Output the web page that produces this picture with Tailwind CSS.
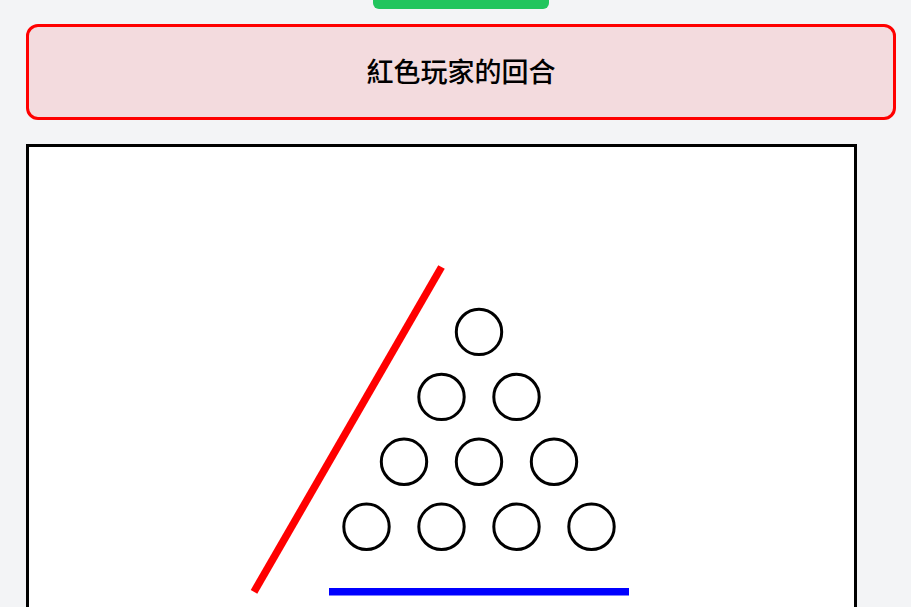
<!DOCTYPE html>
<html lang="zh-Hant">
<head>
<meta charset="utf-8">
<meta name="viewport" content="width=device-width, initial-scale=1">
<title>紅色玩家的回合</title>
<script src="https://cdn.jsdelivr.net/npm/@tailwindcss/browser@4"></script>
</head>
<body class="bg-gray-100 font-['Noto_Sans_CJK_TC',sans-serif] text-black">
<main class="flex h-screen flex-col overflow-hidden pl-[26px] pr-[15px]">
  <button type="button" aria-label="重新開始" class="h-[9px] w-44 shrink-0 self-center rounded-b-md bg-[#22c55e]"></button>
  <p role="status" class="mt-[15px] shrink-0 rounded-xl border-3 border-[#ff0000] bg-[#f3dbde] pt-6 pb-[26px] text-center text-[27px] leading-[40px] font-medium">紅色玩家的回合</p>
  <section aria-label="棋盤" class="mt-6 mr-[39px] min-h-0 flex-1 overflow-hidden border-3 border-b-0 border-black bg-white">
    <svg class="block w-full" viewBox="0 0 825 825" role="img" aria-label="棋盤">
      <g fill="none" stroke="#000" stroke-width="3">
        <circle cx="450" cy="184.9" r="22.7"/>
        <circle cx="412.5" cy="249.9" r="22.7"/>
        <circle cx="487.5" cy="249.9" r="22.7"/>
        <circle cx="375" cy="314.8" r="22.7"/>
        <circle cx="450" cy="314.8" r="22.7"/>
        <circle cx="525" cy="314.8" r="22.7"/>
        <circle cx="337.5" cy="379.8" r="22.7"/>
        <circle cx="412.5" cy="379.8" r="22.7"/>
        <circle cx="487.5" cy="379.8" r="22.7"/>
        <circle cx="562.5" cy="379.8" r="22.7"/>
      </g>
      <line x1="412.5" y1="120" x2="225" y2="444.8" stroke="#f00" stroke-width="7.5"/>
      <line x1="300" y1="444.8" x2="600" y2="444.8" stroke="#00f" stroke-width="7.5"/>
    </svg>
  </section>
</main>
</body>
</html>
